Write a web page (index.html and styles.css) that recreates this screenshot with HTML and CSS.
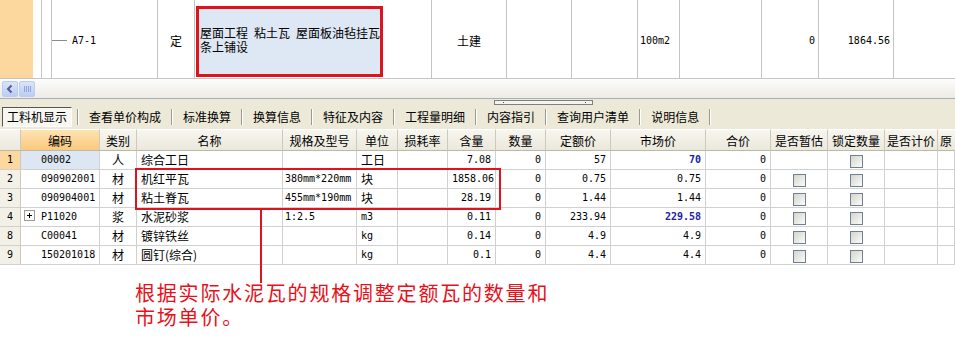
FILE: index.html
```html
<!DOCTYPE html>
<html lang="zh-CN">
  <head>
    <meta charset="UTF-8" />
    <title>工料机显示</title>
    <link rel="stylesheet" href="styles.css">
  </head>
  <body>
    <!-- 定额行 -->
    <div class="top-row">
      <div class="cell row-head"></div>
      <div class="cell"></div>
      <div class="cell"></div>
      <div class="cell tree"><span class="tree-line"></span><span class="mono">A7-1</span></div>
      <div class="cell center">定</div>
      <div class="cell name-cell">
        <div class="name-box">
          <div class="name-text">屋面工程<span class="gap"></span>粘土瓦<span class="gap"></span>屋面板油毡挂瓦<br>条上铺设</div>
        </div>
      </div>
      <div class="cell"></div>
      <div class="cell center">土建</div>
      <div class="cell"></div>
      <div class="cell"></div>
      <div class="cell pad-l"><span class="mono">100m2</span></div>
      <div class="cell"></div>
      <div class="cell right"><span class="mono">0</span></div>
      <div class="cell right"><span class="mono">1864.56</span></div>
      <div class="cell last"></div>
    </div>

    <div class="hscroll">
      <div class="scroll-btn">
        <svg width="14" height="14" viewBox="0 0 14 14"><polyline points="8.5,3.5 5,7 8.5,10.5" fill="none" stroke="#4d6185" stroke-width="2"/></svg>
      </div>
      <div class="scroll-thumb">
        <svg width="14" height="14" viewBox="0 0 14 14">
          <line x1="4.5" y1="4" x2="4.5" y2="10" stroke="#8ea3d6"/>
          <line x1="6.5" y1="4" x2="6.5" y2="10" stroke="#8ea3d6"/>
          <line x1="8.5" y1="4" x2="8.5" y2="10" stroke="#8ea3d6"/>
          <line x1="10.5" y1="4" x2="10.5" y2="10" stroke="#8ea3d6"/>
        </svg>
      </div>
    </div>

    <div class="tabbar">
      <div class="tab active">工料机显示</div>
      <div class="tab-sep"></div>
      <div class="tab">查看单价构成</div>
      <div class="tab-sep"></div>
      <div class="tab">标准换算</div>
      <div class="tab-sep"></div>
      <div class="tab">换算信息</div>
      <div class="tab-sep"></div>
      <div class="tab">特征及内容</div>
      <div class="tab-sep"></div>
      <div class="tab">工程量明细</div>
      <div class="tab-sep"></div>
      <div class="tab">内容指引</div>
      <div class="tab-sep"></div>
      <div class="tab">查询用户清单</div>
      <div class="tab-sep"></div>
      <div class="tab">说明信息</div>
      <div class="tab-sep"></div>
      <div class="splitter"></div>
    </div>

    <div class="grid-wrap">
      <table class="grid">
        <colgroup>
          <col style="width:21px"><col style="width:79px"><col style="width:37px"><col style="width:146px">
          <col style="width:74px"><col style="width:41px"><col style="width:50px"><col style="width:48px">
          <col style="width:50px"><col style="width:65px"><col style="width:95px"><col style="width:65px">
          <col style="width:57px"><col style="width:57px"><col style="width:53px"><col style="width:17px">
        </colgroup>
        <thead>
          <tr>
            <th></th>
            <th class="sel-head">编码</th>
            <th>类别</th>
            <th>名称</th>
            <th>规格及型号</th>
            <th>单位</th>
            <th>损耗率</th>
            <th>含量</th>
            <th>数量</th>
            <th>定额价</th>
            <th>市场价</th>
            <th>合价</th>
            <th>是否暂估</th>
            <th>锁定数量</th>
            <th>是否计价</th>
            <th class="clip">原</th>
          </tr>
        </thead>
        <tbody>
          <tr>
            <td class="rn sel-rn mono">1</td>
            <td class="code sel-cell mono">00002</td>
            <td class="center">人</td>
            <td>综合工日</td>
            <td></td>
            <td>工日</td>
            <td></td>
            <td class="right mono">7.08</td>
            <td class="right mono">0</td>
            <td class="right mono">57</td>
            <td class="right mono price">70</td>
            <td class="right mono">0</td>
            <td></td>
            <td class="center"><span class="check"></span></td>
            <td></td>
            <td></td>
          </tr>
          <tr>
            <td class="rn mono">2</td>
            <td class="code mono">090902001</td>
            <td class="center">材</td>
            <td>机红平瓦</td>
            <td class="mono spec">380mm*220mm</td>
            <td>块</td>
            <td></td>
            <td class="right mono">1858.06</td>
            <td class="right mono">0</td>
            <td class="right mono">0.75</td>
            <td class="right mono">0.75</td>
            <td class="right mono">0</td>
            <td class="center"><span class="check"></span></td>
            <td class="center"><span class="check"></span></td>
            <td></td>
            <td class="mono orig">1</td>
          </tr>
          <tr>
            <td class="rn mono">3</td>
            <td class="code mono">090904001</td>
            <td class="center">材</td>
            <td>粘土脊瓦</td>
            <td class="mono spec">455mm*190mm</td>
            <td>块</td>
            <td></td>
            <td class="right mono">28.19</td>
            <td class="right mono">0</td>
            <td class="right mono">1.44</td>
            <td class="right mono">1.44</td>
            <td class="right mono">0</td>
            <td class="center"><span class="check"></span></td>
            <td class="center"><span class="check"></span></td>
            <td></td>
            <td></td>
          </tr>
          <tr>
            <td class="rn mono">4</td>
            <td class="code has-tree mono"><span class="expander">
              <svg width="11" height="11" viewBox="0 0 11 11"><rect x="0.5" y="0.5" width="10" height="10" fill="#fbfbf8" stroke="#9a9a9a"/><line x1="3" y1="5.5" x2="8" y2="5.5" stroke="#000"/><line x1="5.5" y1="3" x2="5.5" y2="8" stroke="#000"/></svg>
            </span>P11020</td>
            <td class="center">浆</td>
            <td>水泥砂浆</td>
            <td class="mono spec">1:2.5</td>
            <td class="mono">m3</td>
            <td></td>
            <td class="right mono">0.11</td>
            <td class="right mono">0</td>
            <td class="right mono">233.94</td>
            <td class="right mono price">229.58</td>
            <td class="right mono">0</td>
            <td class="center"><span class="check"></span></td>
            <td class="center"><span class="check"></span></td>
            <td></td>
            <td></td>
          </tr>
          <tr>
            <td class="rn mono">8</td>
            <td class="code mono">C00041</td>
            <td class="center">材</td>
            <td>镀锌铁丝</td>
            <td></td>
            <td class="mono">kg</td>
            <td></td>
            <td class="right mono">0.14</td>
            <td class="right mono">0</td>
            <td class="right mono">4.9</td>
            <td class="right mono">4.9</td>
            <td class="right mono">0</td>
            <td class="center"><span class="check"></span></td>
            <td class="center"><span class="check"></span></td>
            <td></td>
            <td></td>
          </tr>
          <tr>
            <td class="rn mono">9</td>
            <td class="code mono">150201018</td>
            <td class="center">材</td>
            <td>圆钉(综合)</td>
            <td></td>
            <td class="mono">kg</td>
            <td></td>
            <td class="right mono">0.1</td>
            <td class="right mono">0</td>
            <td class="right mono">4.4</td>
            <td class="right mono">4.4</td>
            <td class="right mono">0</td>
            <td class="center"><span class="check"></span></td>
            <td class="center"><span class="check"></span></td>
            <td></td>
            <td></td>
          </tr>
        </tbody>
      </table>
      <!-- 标注框和引线 -->
      <div class="mark-box"></div>
      <div class="mark-line"></div>
    </div>

    <p class="note">根据实际水泥瓦的规格调整定额瓦的数量和<br>市场单价。</p>
  </body>
</html>
```

FILE: styles.css
```css
body {
  margin: 0;
  width: 955px;
  font-family: "Noto Sans CJK SC", sans-serif;
  font-size: 12px;
  color: #000000;
  background-color: #ffffff;
  overflow: hidden;
}

.mono {
  font-family: "DejaVu Sans Mono", "Noto Sans CJK SC", monospace;
  font-size: 10px;
}

/* 定额行 */
.top-row {
  display: grid;
  grid-template-columns: 33px 9px 10px 106px 37px 188px 49px 75px 65px 66px 42px 82px 57px 75px 1fr;
  height: 79px;
  box-sizing: border-box;
  border-bottom: 1px solid #c4c4c4;
}

.cell {
  display: flex;
  align-items: center;
  box-sizing: border-box;
  border-right: 1px solid #c4c4c4;
  padding-top: 3px;
  white-space: nowrap;
  overflow: hidden;
}

.cell.row-head {
  background-color: #fdd89e;
  border-right: none;
}

.cell.center {
  justify-content: center;
}

.cell.right {
  justify-content: flex-end;
  padding-right: 3px;
}

.cell.pad-l {
  padding-left: 2px;
}

.cell.last {
  border-right: none;
}

.tree-line {
  display: inline-block;
  width: 15px;
  height: 1px;
  background-color: #8a8a8a;
  margin-right: 5px;
}

.name-cell {
  align-items: flex-start;
  padding-top: 6px;
  border-right: none;
}

.name-box {
  width: 188px;
  height: 71px;
  margin-left: 1px;
  box-sizing: border-box;
  border: 3px solid #e0121b;
  background-color: #dee7f4;
  display: flex;
  align-items: center;
  padding: 0 0 3px 1px;
}

.name-text {
  line-height: 14px;
  white-space: nowrap;
}

.gap {
  display: inline-block;
  width: 6px;
}

/* 横向滚动条 */
.hscroll {
  height: 20px;
  box-sizing: border-box;
  display: flex;
  align-items: center;
  gap: 1px;
  padding-left: 2px;
  background: linear-gradient(#fdfdfb, #ecebe4);
  border-bottom: 1px solid #a8b0bc;
}

.scroll-btn,
.scroll-thumb {
  width: 16px;
  height: 16px;
  box-sizing: border-box;
  border: 1px solid #bccbf2;
  border-radius: 2px;
  background: linear-gradient(#dbe4fb, #bccdf4);
  display: flex;
  align-items: center;
  justify-content: center;
}

/* 页签 */
.tabbar {
  position: relative;
  height: 30px;
  box-sizing: border-box;
  padding: 8px 0 2px 2px;
  display: flex;
  align-items: center;
  background-color: #ece9d9;
}

.tab {
  height: 20px;
  line-height: 20px;
  padding: 0 10px;
  white-space: nowrap;
}

.tab.active {
  padding: 0 4px;
  line-height: 18px;
  box-sizing: border-box;
  border: 1px solid;
  border-color: #555555 #ffffff #ffffff #555555;
  background-color: #f7f6f1;
  margin-right: 5px;
}

.tab-sep {
  width: 1px;
  height: 16px;
  background-color: #9c9a90;
  border-right: 1px solid #ffffff;
}

.splitter {
  position: absolute;
  left: 494px;
  top: 1px;
  width: 99px;
  height: 5px;
  box-sizing: border-box;
  border: 1px solid #7f7f7f;
  background-color: #f4f3ee;
}

.splitter::before,
.splitter::after {
  content: "";
  position: absolute;
  top: 1px;
  width: 1px;
  height: 1px;
  background-color: #555555;
}

.splitter::before {
  left: 8px;
}

.splitter::after {
  right: 6px;
}

/* 工料机表格 */
.grid-wrap {
  position: relative;
}

.grid {
  width: 955px;
  table-layout: fixed;
  border-collapse: separate;
  border-spacing: 0;
}

.grid thead tr {
  height: 22px;
}

.grid tbody tr {
  height: 19px;
}

.grid th {
  padding: 0;
  font-weight: normal;
  white-space: nowrap;
  overflow: hidden;
  background: linear-gradient(#f7f6ef, #ebe8dc);
  border-top: 1px solid #ffffff;
  border-right: 1px solid #cdcabb;
  border-bottom: 1px solid #bcb9a9;
}

.grid th.sel-head {
  background: linear-gradient(#fee3b1, #f9c97e);
}

.grid th.clip {
  text-align: left;
  padding-left: 2px;
  border-right: none;
}

.grid td {
  padding: 0 4px;
  white-space: nowrap;
  overflow: hidden;
  border-right: 1px solid #d0d0d0;
  border-bottom: 1px solid #d0d0d0;
  line-height: 18px;
}

.grid td.rn {
  padding: 0;
  text-align: center;
  background-color: #f3f1e7;
  border-right-color: #cdcabb;
}

.grid td.sel-rn {
  background-color: #fdd89e;
}

.grid td.code {
  padding-left: 20px;
}

.grid td.code.has-tree {
  padding-left: 3px;
}

.grid td.sel-cell {
  background-color: #dde7f4;
}

.grid td.spec {
  padding-left: 2px;
}

.grid td.orig {
  padding-left: 15px;
}

.grid td.center {
  text-align: center;
}

.grid td.right {
  text-align: right;
}

.price {
  color: #1c1cab;
  font-weight: bold;
}

.expander {
  display: inline-block;
  width: 11px;
  height: 11px;
  margin-right: 6px;
  vertical-align: -1px;
}

.expander svg {
  display: block;
}

.check {
  display: inline-block;
  width: 13px;
  height: 13px;
  box-sizing: border-box;
  border: 1px solid #6f7f94;
  background: linear-gradient(135deg, #d5d5cd, #fbfbf9);
  vertical-align: middle;
}

.mark-box {
  position: absolute;
  left: 135px;
  top: 39px;
  width: 366px;
  height: 42px;
  box-sizing: border-box;
  border: 2px solid #e0121b;
}

.mark-line {
  position: absolute;
  left: 260px;
  top: 80px;
  width: 2px;
  height: 74px;
  background-color: #e0121b;
}

/* 说明文字 */
.note {
  margin: 16px 0 0 135px;
  color: #e8101a;
  font-size: 20px;
  line-height: 24px;
  letter-spacing: 1.8px;
}
```
